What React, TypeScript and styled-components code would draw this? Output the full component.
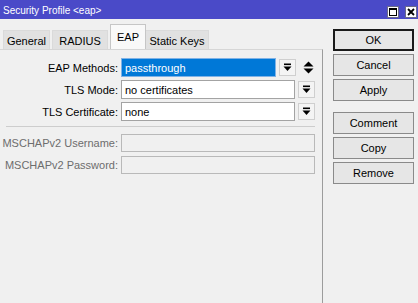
import styled, { createGlobalStyle } from 'styled-components';

const Global = createGlobalStyle`
	html, body {
		margin: 0;
		padding: 0;
		background: #f0f0f0;
	}
	body {
		font-family: 'Liberation Sans', Arial, sans-serif;
		font-size: 11px;
		color: #000;
	}
`;

const Window = styled.div`
	width: 418px;
	height: 303px;
	display: flex;
	flex-direction: column;
	background: #f0f0f0;
	overflow: hidden;
`;

const TitleBar = styled.div`
	height: 19px;
	background: #4a4ac8;
	display: flex;
	align-items: center;
	padding: 0 1px 0 3px;
	color: #fff;
	font-size: 10px;
`;

const Title = styled.div`
	flex: 1;
	padding-top: 1px;
`;

const TitleButtons = styled.div`
	display: flex;
	gap: 6px;
	align-items: center;
	margin-top: 4px;
`;

const CaptionBox = styled.div`
	width: 12px;
	height: 12px;
	background: #fff;
	box-sizing: border-box;
	border: 1px solid #6a6a8a;
	display: flex;
	align-items: center;
	justify-content: center;
`;

const Body = styled.div`
	flex: 1;
	display: flex;
`;

const Main = styled.div`
	width: 323px;
	flex-shrink: 0;
	box-sizing: border-box;
	display: flex;
	flex-direction: column;
`;

const TabStrip = styled.div`
	height: 30px;
	display: flex;
	align-items: flex-end;
	padding-left: 3px;
	box-sizing: border-box;
`;

const Tab = styled.div<{ w: number; active?: boolean }>`
	width: ${(p) => p.w}px;
	height: ${(p) => (p.active ? 25 : 19)}px;
	margin: ${(p) => (p.active ? '0 -1px 0 0' : '0 2px 0 0')};
	box-sizing: border-box;
	display: flex;
	align-items: center;
	justify-content: center;
	background: ${(p) => (p.active ? '#f9f9f9' : '#e1e1e1')};
	border: 1px solid ${(p) => (p.active ? '#c6c6c6' : '#dadada')};
	border-bottom: none;
	padding-top: ${(p) => (p.active ? 0 : 1)}px;
	position: relative;
	z-index: ${(p) => (p.active ? 1 : 0)};
	font-size: 11px;
`;

const Panel = styled.div`
	flex: 1;
	border-top: 1px solid #d6d6d6;
	border-right: 1px solid #9c9c9c;
	padding: 8px 7px 0 0;
`;

const FormGrid = styled.div`
	display: grid;
	grid-template-columns: 118px 1fr;
	column-gap: 3px;
	row-gap: 3px;
	align-items: center;
`;

const Label = styled.div<{ disabled?: boolean }>`
	text-align: right;
	white-space: nowrap;
	color: ${(p) => (p.disabled ? '#6d6d6d' : '#000')};
`;

const Field = styled.div`
	display: flex;
	align-items: center;
	height: 19px;
`;

const Input = styled.div<{ selected?: boolean; disabled?: boolean }>`
	flex: 1;
	height: ${(p) => (p.disabled ? 18 : 19)}px;
	box-sizing: border-box;
	border: 1px solid
		${(p) => (p.selected ? '#7fb2e6' : p.disabled ? '#b9b9b9' : '#a3a3a3')};
	background: ${(p) => (p.selected ? '#0078d7' : p.disabled ? '#f0f0f0' : '#fff')};
	color: ${(p) => (p.selected ? '#fff' : '#000')};
	padding: 1px 3px 0;
	display: flex;
	align-items: center;
	white-space: nowrap;
`;

const DropButton = styled.div`
	width: 17px;
	height: 17px;
	margin-left: 3px;
	box-sizing: border-box;
	border: 1px solid #cfcfcf;
	background: #f4f4f4;
	display: flex;
	align-items: center;
	justify-content: center;
`;

const Spinner = styled.div`
	width: 14px;
	margin-left: 5px;
	display: flex;
	justify-content: center;
`;

const Separator = styled.div`
	height: 1px;
	background: #cdcdcd;
	margin: 5px 0 6px 6px;
`;

const Side = styled.div`
	width: 95px;
	flex-shrink: 0;
	box-sizing: border-box;
	padding: 10px 4px 0 10px;
	display: flex;
	flex-direction: column;
	gap: 3px;
`;

const Button = styled.div<{ primary?: boolean; spaced?: boolean }>`
	height: 22px;
	box-sizing: border-box;
	border: ${(p) => (p.primary ? '2px solid #1a1a1a' : '1px solid #8a8a8a')};
	background: #e6e6e6;
	display: flex;
	align-items: center;
	justify-content: center;
	margin-top: ${(p) => (p.spaced ? 8 : 0)}px;
`;

const DropIcon = () => (
	<svg width="9" height="9" viewBox="0 0 9 9">
		<rect x="1" y="0.5" width="7" height="1.6" fill="#000" />
		<polygon points="0.5,3.5 8.5,3.5 4.5,8" fill="#000" />
	</svg>
);

const SpinIcon = () => (
	<svg width="11" height="13" viewBox="0 0 11 13">
		<polygon points="5.5,0.5 10.5,5.5 0.5,5.5" fill="#000" />
		<polygon points="0.5,7.5 10.5,7.5 5.5,12.5" fill="#000" />
	</svg>
);

const MaxIcon = () => (
	<svg width="8" height="8" viewBox="0 0 8 8">
		<rect x="0.5" y="0.5" width="7" height="7" fill="none" stroke="#000" />
		<rect x="0" y="0" width="8" height="2" fill="#000" />
	</svg>
);

const CloseIcon = () => (
	<svg width="8" height="8" viewBox="0 0 8 8">
		<path d="M1 1 L7 7 M7 1 L1 7" stroke="#000" strokeWidth="1.8" />
	</svg>
);

const tabs = [
	{ name: 'General', w: 47 },
	{ name: 'RADIUS', w: 56 },
	{ name: 'EAP', w: 36, active: true },
	{ name: 'Static Keys', w: 64 },
];

export default function App() {
	return (
		<Window>
			<Global />
			<TitleBar>
				<Title>Security Profile &lt;eap&gt;</Title>
				<TitleButtons>
					<CaptionBox>
						<MaxIcon />
					</CaptionBox>
					<CaptionBox>
						<CloseIcon />
					</CaptionBox>
				</TitleButtons>
			</TitleBar>
			<Body>
				<Main>
					<TabStrip>
						{tabs.map((t) => (
							<Tab key={t.name} w={t.w} active={t.active}>
								{t.name}
							</Tab>
						))}
					</TabStrip>
					<Panel>
						<FormGrid>
							<Label>EAP Methods:</Label>
							<Field>
								<Input selected>passthrough</Input>
								<DropButton>
									<DropIcon />
								</DropButton>
								<Spinner>
									<SpinIcon />
								</Spinner>
							</Field>
							<Label>TLS Mode:</Label>
							<Field>
								<Input>no certificates</Input>
								<DropButton>
									<DropIcon />
								</DropButton>
							</Field>
							<Label>TLS Certificate:</Label>
							<Field>
								<Input>none</Input>
								<DropButton>
									<DropIcon />
								</DropButton>
							</Field>
						</FormGrid>
						<Separator />
						<FormGrid>
							<Label disabled>MSCHAPv2 Username:</Label>
							<Field>
								<Input disabled />
							</Field>
							<Label disabled>MSCHAPv2 Password:</Label>
							<Field>
								<Input disabled />
							</Field>
						</FormGrid>
					</Panel>
				</Main>
				<Side>
					<Button primary>OK</Button>
					<Button>Cancel</Button>
					<Button>Apply</Button>
					<Button spaced>Comment</Button>
					<Button>Copy</Button>
					<Button>Remove</Button>
				</Side>
			</Body>
		</Window>
	);
}
